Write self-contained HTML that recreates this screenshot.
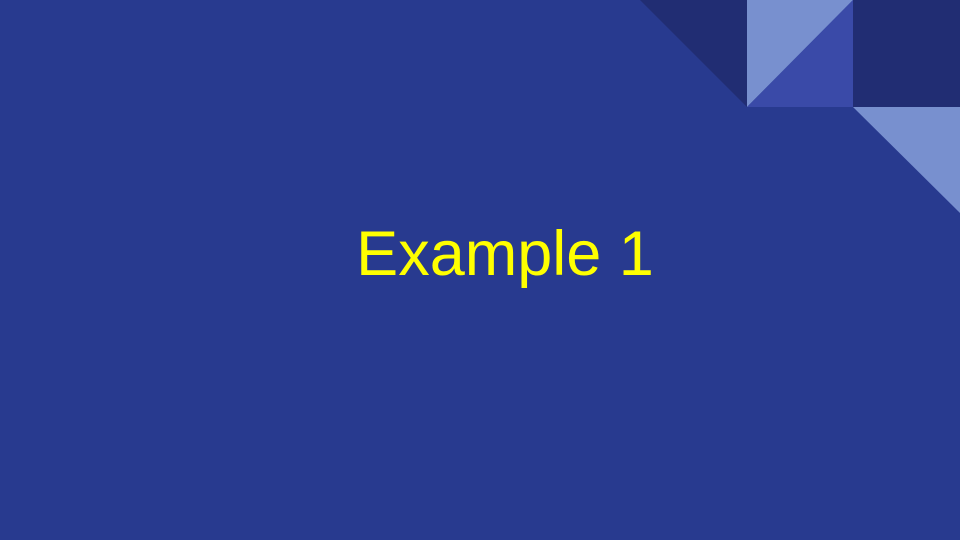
<!DOCTYPE html>
<html><head><style>
html,body{margin:0;padding:0;}
body{width:960px;height:540px;background:#283a8f;position:relative;overflow:hidden;}
svg{position:absolute;left:0;top:0;}
.t{position:absolute;left:0;width:1010px;text-align:center;top:218px;font-family:"Liberation Sans",sans-serif;font-size:63px;line-height:72px;color:#ffff00;white-space:nowrap;}
</style></head><body>
<svg width="960" height="540">
<polygon points="640,0 747,0 747,107" fill="#212d73"/>
<polygon points="747,0 853,0 747,107" fill="#7890cf"/>
<polygon points="853,0 853,107 747,107" fill="#3a4aa8"/>
<rect x="853" y="0" width="107" height="107" fill="#212d73"/>
<polygon points="853,107 960,107 960,213" fill="#7890cf"/>
</svg>
<div class="t">Example 1</div>
</body></html>
